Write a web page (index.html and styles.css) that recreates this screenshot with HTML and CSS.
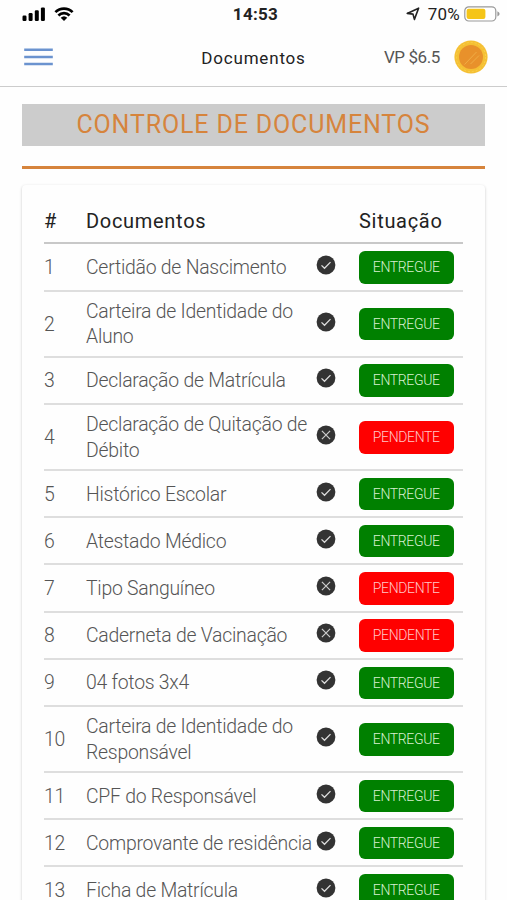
FILE: index.html
```html
<!DOCTYPE html>
<html lang="pt-BR">
  <head>
    <meta charset="UTF-8" />
    <meta name="viewport" content="width=device-width, initial-scale=1.0" />
    <title>Documentos</title>
    <link rel="stylesheet" href="styles.css">
  </head>
  <body>
    <!-- Icons used in the list -->
    <svg width="0" height="0" class="sprite">
      <symbol id="check" viewBox="0 0 20 20">
        <circle cx="10" cy="10" r="9.4" fill="#333" />
        <path d="M5.5 10.4l3 2.9 6-6.2" fill="none" stroke="#ddd" stroke-width="1.3" />
      </symbol>
      <symbol id="cross" viewBox="0 0 20 20">
        <circle cx="10" cy="10" r="9.4" fill="#333" />
        <path d="M5.9 5.9l8.2 8.2M14.1 5.9l-8.2 8.2" fill="none" stroke="#ccc" stroke-width="1.2" />
      </symbol>
    </svg>

    <!-- Status bar -->
    <div class="status">
      <div class="status-left">
        <svg width="24" height="15" viewBox="0 0 24 15">
          <rect x="0.5" y="8.5" width="4" height="5.5" rx="1.2" />
          <rect x="6.6" y="6" width="4" height="8" rx="1.2" />
          <rect x="12.8" y="3.3" width="4" height="10.7" rx="1.2" />
          <rect x="18.9" y="0.4" width="4" height="13.6" rx="1.2" />
        </svg>
        <svg width="20" height="15" viewBox="0 0 20 15">
          <path d="M1.4 5.1a12.2 12.2 0 0 1 17.2 0M4.4 8.5a8 8 0 0 1 11.2 0" fill="none" stroke="#000" stroke-width="2.7" />
          <path d="M10 14l-3.3-3.3a4.8 4.8 0 0 1 6.6 0z" />
        </svg>
      </div>
      <div class="clock">14:53</div>
      <div class="status-right">
        <svg width="14" height="14" viewBox="0 0 14 14">
          <path d="M1.2 6.4L12.6 1.2 8.4 12.4 7 7.1z" fill="none" stroke="#222" stroke-width="1.6" stroke-linejoin="round" />
        </svg>
        <span class="percent">70%</span>
        <svg width="36" height="16" viewBox="0 0 36 16">
          <rect x="0.8" y="0.8" width="31" height="14.2" rx="4" fill="#fff" stroke="#999" stroke-width="1.2" />
          <rect x="2.6" y="2.7" width="18.8" height="10.4" rx="2" fill="#f5c518" />
          <path d="M33.4 5.3q4.4 2.6 0 5.2z" fill="#999" />
        </svg>
      </div>
    </div>

    <!-- Navbar -->
    <div class="navbar">
      <svg class="menu" width="30" height="18" viewBox="0 0 30 18">
        <path d="M0.2 1.7h28.6M0.2 8.9h28.6M0.2 16h28.6" stroke="#6b93cf" stroke-width="2.5" />
      </svg>
      <div class="title">Documentos</div>
      <div class="coins">
        <span>VP $6.5</span>
        <svg width="34" height="34" viewBox="0 0 34 34">
          <circle cx="17" cy="17" r="16.6" fill="#f5c034" />
          <circle cx="17" cy="17" r="14.6" fill="none" stroke="#f9d04c" stroke-width="1" stroke-dasharray="2 2" />
          <circle cx="17" cy="17" r="12" fill="#e8912b" />
          <path d="M10.5 24.5L22.5 12M16.5 24L25 15.5" stroke="#f0ad45" stroke-width="1" />
        </svg>
      </div>
    </div>

    <div class="content">
      <h1>CONTROLE DE DOCUMENTOS</h1>
      <div class="line"></div>
      <div class="card">
        <div class="row head">
          <span>#</span><span>Documentos</span><span></span><span>Situação</span>
        </div>
        <div id="list"></div>
      </div>
    </div>

    <script src="script.js"></script>
  </body>
</html>
```

FILE: styles.css
```css
body {
  margin: 0;
  height: 900px;
  overflow: hidden;
  background-color: #fefefe;
  font-family: Roboto, sans-serif;
  color: #555;
}
.sprite {
  display: none;
}

/* status bar */
.status {
  display: grid;
  grid-template-columns: 1fr auto 1fr;
  align-items: center;
  height: 28px;
  padding: 0 7px 0 22px;
}
.status svg {
  display: block;
}
.status-left {
  display: flex;
  gap: 8px;
}
.clock {
  color: #222;
  font-size: 17px;
  font-weight: 700;
  letter-spacing: 0.3px;
  padding-right: 11px;
}
.status-right {
  display: flex;
  align-items: center;
  justify-content: flex-end;
  color: #222;
}
.percent {
  font-size: 17px;
  letter-spacing: 0.2px;
  margin: 0 4px 0 8px;
}

/* navbar */
.navbar {
  display: grid;
  grid-template-columns: 1fr auto 1fr;
  align-items: center;
  height: 58px;
  padding: 0 19px 0 24px;
  border-bottom: 1px solid #ccc;
}
.menu {
  display: block;
}
.title {
  color: #222;
  font-size: 17px;
  letter-spacing: 0.8px;
  padding: 2px 5px 0 0;
}
.coins {
  display: flex;
  align-items: center;
  justify-content: flex-end;
  gap: 14px;
  font-size: 17px;
  letter-spacing: -0.4px;
}

/* page */
.content {
  padding: 17px 22px 0;
}
h1 {
  margin: 0 0 20px;
  height: 42px;
  line-height: 41px;
  background-color: #ccc;
  color: #d6843c;
  font-size: 25px;
  font-weight: 400;
  letter-spacing: 0.85px;
  text-align: center;
}
.line {
  height: 3px;
  background-color: #d6843c;
}
.card {
  margin-top: 16px;
  padding: 16.4px 22px;
  border-radius: 4px;
  background-color: #fefefe;
  box-shadow: 0 1px 3px rgba(0, 0, 0, 0.22);
}
.row {
  display: grid;
  grid-template-columns: 42px 230px 43px 1fr;
  align-items: center;
  box-sizing: border-box;
  min-height: 47.2px;
  padding: 7.3px 0 6px;
  border-bottom: 2px solid #dedede;
  font-size: 19.4px;
  font-weight: 300;
  line-height: 25.4px;
  letter-spacing: -0.24px;
  white-space: nowrap;
}
.head {
  min-height: 43px;
  padding: 0;
  border-bottom: 2px solid #c8c8c8;
  color: #222;
  font-weight: 400;
  font-size: 20px;
  letter-spacing: 0.7px;
}
.icon {
  display: block;
  width: 20px;
  height: 20px;
  margin-top: -5px;
}
.badge {
  justify-self: start;
  width: 94.5px;
  height: 32.4px;
  margin: -3.5px 0 -3px;
  border-radius: 6px;
  color: #d8f0d0;
  font-size: 14px;
  line-height: 32px;
  letter-spacing: -0.35px;
  text-align: center;
}
.entregue {
  background-color: #008000;
}
.pendente {
  background-color: #f00;
  color: #ffc8c8;
}
```

FILE: script.js
```javascript
const docs = [
  ["Certidão de Nascimento", true],
  ["Carteira de Identidade do<br>Aluno", true],
  ["Declaração de Matrícula", true],
  ["Declaração de Quitação de<br>Débito", false],
  ["Histórico Escolar", true],
  ["Atestado Médico", true],
  ["Tipo Sanguíneo", false],
  ["Caderneta de Vacinação", false],
  ["04 fotos 3x4", true],
  ["Carteira de Identidade do<br>Responsável", true],
  ["CPF do Responsável", true],
  ["Comprovante de residência", true],
  ["Ficha de Matrícula", true],
];

document.getElementById("list").innerHTML = docs
  .map(
    ([name, ok], i) => `
    <div class="row">
      <span>${i + 1}</span>
      <span>${name}</span>
      <svg class="icon"><use href="#${ok ? "check" : "cross"}" /></svg>
      <span class="badge ${ok ? "entregue" : "pendente"}">${ok ? "ENTREGUE" : "PENDENTE"}</span>
    </div>`
  )
  .join("");
```
